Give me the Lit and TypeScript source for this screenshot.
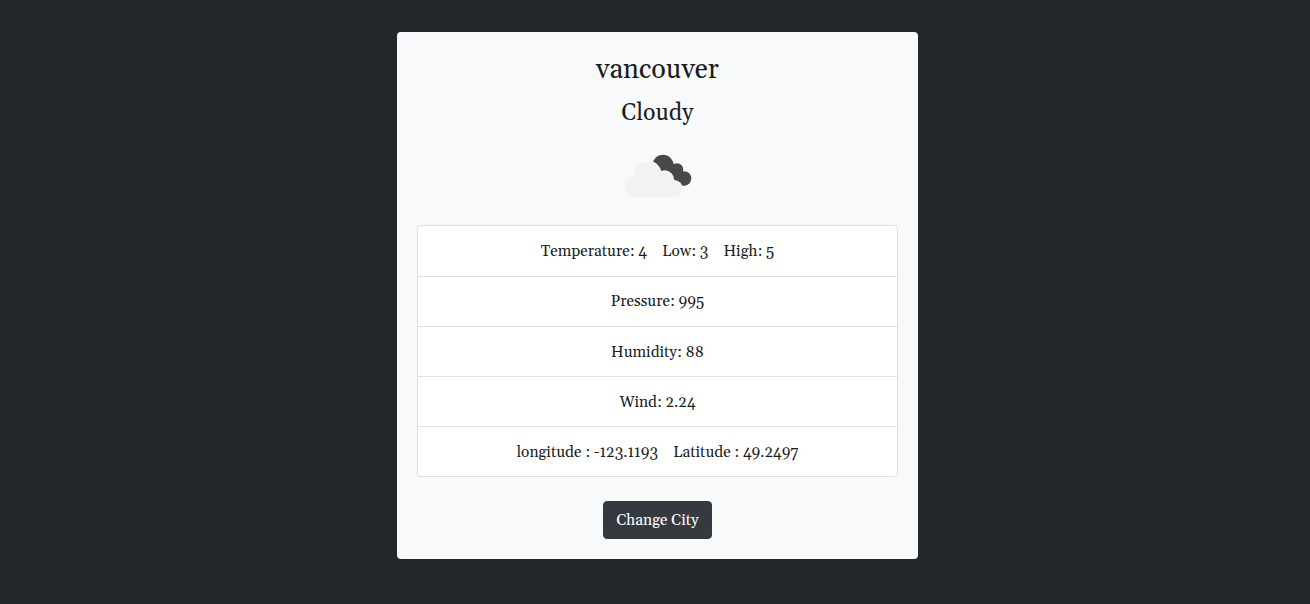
import { LitElement, html, css } from "lit";
import { customElement } from "lit/decorators.js";

const rows: string[][] = [
  ["Temperature: 4", "Low: 3", "High: 5"],
  ["Pressure: 995"],
  ["Humidity: 88"],
  ["Wind: 2.24"],
  ["longitude : -123.1193", "Latitude : 49.2497"],
];

@customElement("app-root")
export class AppRoot extends LitElement {
  static styles = css`
    :host {
      display: flex;
      justify-content: center;
      align-items: flex-start;
      box-sizing: border-box;
      height: 100vh;
      padding: 32px 0 0 5px;
      background: #23272b;
      color: #1a1d20;
      font-family: Gelasio, "Liberation Serif", serif;
      font-size: 15.45px;
      line-height: 24px;
    }
    .card {
      box-sizing: border-box;
      width: 521px;
      height: 527px;
      padding: 21px 20px 20px;
      border-radius: 4px;
      background: #f8f9fb;
      display: flex;
      flex-direction: column;
      align-items: center;
    }
    .city {
      margin: 0 0 10px;
      font-size: 27px;
      font-weight: 400;
      line-height: 34px;
    }
    .condition {
      margin: 0 0 7px;
      font-size: 23.1px;
      font-weight: 400;
      line-height: 34px;
    }
    .icon {
      display: block;
      width: 101px;
      height: 70px;
      margin-bottom: 17px;
    }
    .list {
      box-sizing: border-box;
      width: 481px;
      height: 252px;
      margin: 0 0 24px;
      padding: 0;
      list-style: none;
      display: grid;
      grid-template-rows: repeat(5, 1fr);
      border: 1px solid #dfdfe0;
      border-radius: 4px;
      background: #fff;
    }
    .row {
      display: flex;
      justify-content: center;
      align-items: center;
      gap: 15.2px;
      padding-top: 2px;
      white-space: pre;
    }
    .row + .row {
      border-top: 1px solid #dfdfe0;
    }
    .row:nth-child(2) {
      padding-top: 1px;
    }
    .change {
      box-sizing: border-box;
      width: 109px;
      height: 38px;
      padding: 1px 0 0;
      border: 1px solid #343a40;
      border-radius: 4px;
      background: #343a40;
      color: #fff;
      font: 15.45px/24px Gelasio, "Liberation Serif", serif;
    }
  `;

  render() {
    return html`
      <main class="card">
        <h1 class="city">vancouver</h1>
        <h2 class="condition">Cloudy</h2>
        <svg class="icon" viewBox="607 138 101 70" aria-label="Broken clouds">
          <g fill="#484849">
            <circle cx="663" cy="165.500" r="10.700" />
            <circle cx="677" cy="169.500" r="6.300" />
            <circle cx="684" cy="178.500" r="7.300" />
            <path d="M660 168L674 164L684 185.800L674 182Z" />
          </g>
          <g fill="#f8f9fb">
            <circle cx="647.500" cy="174.800" r="14.200" />
            <circle cx="664.500" cy="180" r="9.700" />
            <circle cx="674" cy="188.800" r="8.800" />
          </g>
          <g fill="#f2f2f1">
            <circle cx="635.300" cy="186.300" r="10.700" />
            <circle cx="647.500" cy="174.800" r="13.300" />
            <circle cx="664.500" cy="180" r="8.800" />
            <circle cx="674" cy="188.800" r="8.200" />
            <path d="M635 178H668L674 184V197H635Z" />
          </g>
        </svg>
        <ul class="list">
          ${rows.map(
            (row) => html`<li class="row">${row.map((text) => html`<span>${text}</span>`)}</li>`
          )}
        </ul>
        <button class="change">Change City</button>
      </main>
    `;
  }
}
